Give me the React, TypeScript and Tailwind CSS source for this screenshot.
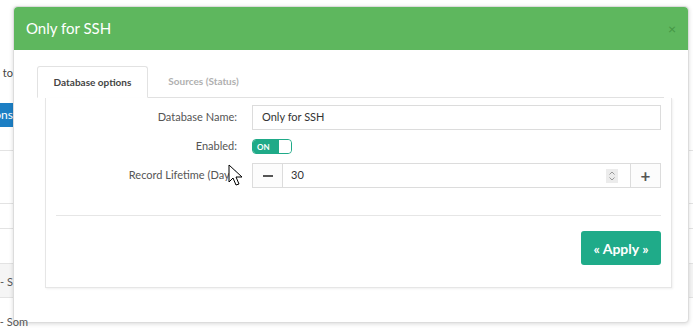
import React from "react";

function Cursor() {
  return (
    <svg
      className="absolute left-[228px] top-[164px]"
      width="16"
      height="24"
      viewBox="0 0 16 24"
    >
      <path
        d="M1 1 L1 18 L5 14 L8 21 L11 20 L8 13 L14 13 Z"
        fill="#fff"
        stroke="#000"
        strokeWidth="1"
        strokeLinejoin="round"
      />
    </svg>
  );
}

export default function App() {
  return (
    <div
      className="relative w-[693px] h-[329px] overflow-hidden bg-white text-[#333]"
      style={{ fontFamily: "Lato, 'Open Sans', Arial, sans-serif" }}
    >
      {/* background page */}
      <div className="flex flex-col w-full pt-[66px]">
        <div className="h-[15px] flex items-center text-[11px] text-[#444] whitespace-nowrap">
          <div className="w-[13px] overflow-hidden flex justify-end">
            <span>e to</span>
          </div>
        </div>
        <div className="h-[22px]" />
        <div className="h-[24px] flex">
          <div className="w-[13px] overflow-hidden flex justify-end items-center bg-[#1c7fc4] text-white text-[12px] whitespace-nowrap">
            <span>ons</span>
          </div>
        </div>
        <div className="h-[23px]" />
        <div className="h-[53px] border-t border-[#e3e3e3]" />
        <div className="h-[25px] border-t border-[#e3e3e3]" />
        <div className="h-[35px] border-t border-[#e3e3e3]" />
        <div className="h-[35px] border-t border-b border-[#e3e3e3] bg-[#f5f5f5] flex items-center pt-[4px] text-[11px] text-[#555] whitespace-nowrap">
          <div className="w-[13px] overflow-hidden flex justify-end">
            <span>e - S</span>
          </div>
        </div>
        <div className="relative z-10 h-[33px] flex items-end pb-[1px] text-[11px] text-[#555] whitespace-nowrap">
          <div className="w-[28px] overflow-hidden flex justify-end">
            <span>e - Som</span>
          </div>
        </div>
      </div>

      {/* modal */}
      <div className="absolute left-[13px] top-[6px] w-[676px] h-[317px] bg-white border border-[#dcdcdc] rounded-[4px] shadow-[0_1px_4px_rgba(0,0,0,0.15)] flex flex-col">
        <div className="h-[43px] bg-[#5eb75e] rounded-t-[4px] flex items-center justify-between pl-[12px] pr-[12px]">
          <span className="text-white text-[15px] leading-none">Only for SSH</span>
          <span className="text-[#3f8f40] text-[14px] leading-none opacity-80">×</span>
        </div>

        <div className="pt-[16px] pl-[23px] pr-[24px]">
          {/* tabs */}
          <div className="flex items-end border-b border-[#e2e2e2] h-[32px]">
            <div className="w-[111px] h-[32px] -mb-px border border-[#e2e2e2] border-b-white bg-white rounded-t-[3px] flex items-center justify-center text-[10px] font-bold text-[#444]">
              Database options
            </div>
            <div className="w-[111px] h-[31px] flex items-center justify-center text-[10px] font-bold text-[#b0b0b0]">
              Sources (Status)
            </div>
          </div>
        </div>

        {/* tab panel */}
        <div className="ml-[31px] mr-[16px] border-l border-r border-b border-[#e6e6e6] shadow-[1px_1px_2px_rgba(0,0,0,0.06)] px-[10px] pt-[7px] pb-[22px]">
          <div className="flex flex-col gap-[4px]">
            <div className="flex items-center h-[25px]">
              <div className="w-[181px] text-right text-[11px] text-[#555]">Database Name:</div>
              <div className="ml-[15px] flex-1 h-[25px] border border-[#dcdcdc] flex items-center px-[9px] text-[11px] text-[#333]">
                Only for SSH
              </div>
            </div>
            <div className="flex items-center h-[25px]">
              <div className="w-[181px] text-right text-[11px] text-[#555]">Enabled:</div>
              <div className="ml-[15px] w-[40px] h-[15px] rounded-[4px] border border-[#1faa88] flex overflow-hidden">
                <div className="w-[26px] bg-[#1faa88] text-white text-[8px] font-bold flex items-center pl-[4px]">
                  ON
                </div>
                <div className="flex-1 bg-white rounded-[3px]" />
              </div>
            </div>
            <div className="flex items-center h-[25px]">
              <div className="w-[181px] text-right text-[11px] text-[#555] whitespace-nowrap">
                Record Lifetime (Days)
              </div>
              <div className="ml-[15px] flex-1 h-[25px] flex">
                <div className="w-[31px] border border-[#dcdcdc] bg-[#fcfcfc] flex items-center justify-center">
                  <div className="w-[10px] h-[2px] bg-[#555]" />
                </div>
                <div className="flex-1 border-t border-b border-[#dcdcdc] flex items-center justify-between pl-[8px] pr-[12px] text-[11px] text-[#333]">
                  <span>30</span>
                  <div className="w-[12px] h-[14px] bg-[#ececec] flex items-center justify-center">
                    <svg width="8" height="12" viewBox="0 0 8 12">
                      <path d="M1.5 4.5 L4 2 L6.5 4.5" fill="none" stroke="#999" strokeWidth="1" />
                      <path d="M1.5 7.5 L4 10 L6.5 7.5" fill="none" stroke="#999" strokeWidth="1" />
                    </svg>
                  </div>
                </div>
                <div className="w-[31px] border border-[#dcdcdc] bg-[#fcfcfc] flex items-center justify-center text-[#555] text-[17px] font-bold leading-none">
                  +
                </div>
              </div>
            </div>
          </div>

          <div className="mt-[27px] border-t border-[#e6e6e6]" />

          <div className="mt-[15px] flex justify-end">
            <div className="w-[80px] h-[34px] rounded-[3px] bg-[#1fab89] text-white text-[14px] font-bold flex items-center justify-center">
              « Apply »
            </div>
          </div>
        </div>
      </div>

      <Cursor />
    </div>
  );
}
